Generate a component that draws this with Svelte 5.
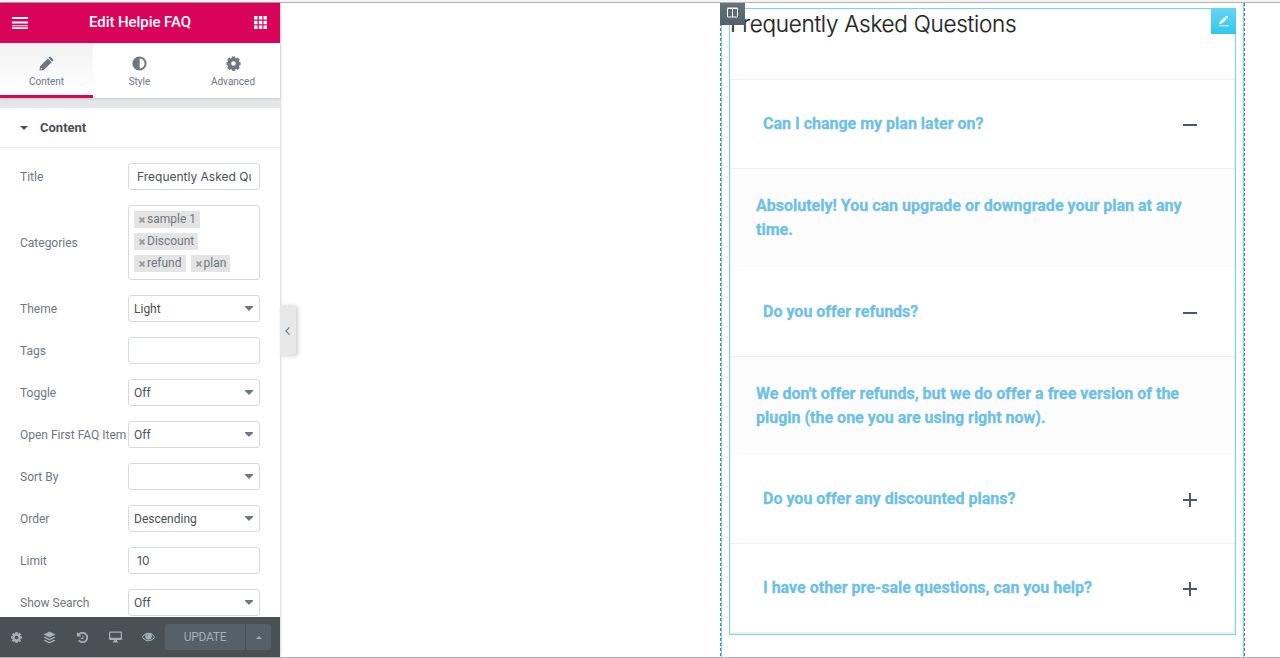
<script>
  const tabs = [
    { id: 'content', label: 'Content' },
    { id: 'style', label: 'Style' },
    { id: 'advanced', label: 'Advanced' }
  ];
  let active = $state('content');

  const controls = [
    { label: 'Title', type: 'text', value: 'Frequently Asked Questions' },
    { label: 'Categories', type: 'tags', value: ['sample 1', 'Discount', 'refund', 'plan'] },
    { label: 'Theme', type: 'select', value: 'Light' },
    { label: 'Tags', type: 'text', value: '' },
    { label: 'Toggle', type: 'select', value: 'Off' },
    { label: 'Open First FAQ Item', type: 'select', value: 'Off' },
    { label: 'Sort By', type: 'select', value: '' },
    { label: 'Order', type: 'select', value: 'Descending' },
    { label: 'Limit', type: 'text', value: '10' },
    { label: 'Show Search', type: 'select', value: 'Off' }
  ];

  let faqs = $state([
    { q: 'Can I change my plan later on?', a: 'Absolutely! You can upgrade or downgrade your plan at any time.', open: true },
    { q: 'Do you offer refunds?', a: "We don't offer refunds, but we do offer a free version of the plugin (the one you are using right now).", open: true },
    { q: 'Do you offer any discounted plans?', a: '', open: false },
    { q: 'I have other pre-sale questions, can you help?', a: '', open: false }
  ]);

  const cog = 'M1152 896q0-106-75-181t-181-75-181 75-75 181 75 181 181 75 181-75 75-181zm512-109v222q0 12-8 23t-20 13l-185 28q-19 54-39 91 35 50 107 138 10 12 10 25t-9 23q-27 37-99 108t-94 71q-12 0-26-9l-138-108q-44 23-91 38-16 136-29 186-7 28-36 28h-222q-14 0-24.5-8.5t-11.500-21.500l-28-184q-49-16-90-37l-141 107q-10 9-25 9-14 0-25-11-126-114-165-168-7-10-7-23 0-12 8-23 15-21 51-66.500t54-70.500q-27-50-41-99l-183-27q-13-2-21-12.500t-8-23.500v-222q0-12 8-23t19-13l186-28q14-46 39-92-40-57-107-138-10-12-10-24 0-10 9-23 26-36 98.500-107.500t94.500-71.500q13 0 26 10l138 107q44-23 91-38 16-136 29-186 7-28 36-28h222q14 0 24.500 8.500t11.500 21.500l28 184q49 16 90 37l142-107q9-9 24-9 13 0 25 10 129 119 165 170 7 8 7 22 0 12-8 23-15 21-51 66.500t-54 70.500q26 50 41 98l183 28q13 2 21 12.500t8 23.500z';
  const history = 'M1664 896q0 156-61 298t-164 245-245 164-298 61q-172 0-327-72.500t-264-204.500q-7-10-6.500-22.500t8.500-20.500l137-138q10-9 25-9 16 2 23 12 73 95 179 147t225 52q104 0 198.500-40.500t163.500-109.500 109.500-163.500 40.500-198.500-40.500-198.500-109.500-163.500-163.500-109.500-198.500-40.500q-98 0-188 35.500t-160 101.500l137 138q31 30 14 69-17 40-59 40h-448q-26 0-45-19t-19-45v-448q0-42 40-59 39-17 69 14l130 129q107-101 244.500-156.500t284.500-55.500q156 0 298 61t245 164 164 245 61 298zm-640-288v448q0 14-9 23t-23 9h-320q-14 0-23-9t-9-23v-64q0-14 9-23t23-9h224v-352q0-14 9-23t23-9h64q14 0 23 9t9 23z';
</script>

<div class="app">
  <aside class="panel">
    <header class="bar">
      <svg width="16" height="12" viewBox="0 0 16 12" fill="#fff"><path d="M0 0h16v2H0zM0 4.500h16v2H0zM0 10.200h16V12H0z" /><path d="M0 8h16v1.300H0z" opacity=".75" /></svg>
      <h1>Edit Helpie FAQ</h1>
      <svg class="grid" width="13" height="13" viewBox="0 0 13 13" fill="#fff"><path d="M0 0h3.500v3.500H0zM4.800 0h3.500v3.500H4.800zM9.500 0H13v3.500H9.500zM0 4.800h3.500v3.500H0zM4.800 4.800h3.500v3.500H4.800zM9.500 4.800H13v3.500H9.500zM0 9.500h3.500V13H0zM4.800 9.500h3.500V13H4.800zM9.500 9.500H13V13H9.500z" /></svg>
    </header>

    <nav class="tabs">
      {#each tabs as tab}
        <button class="tab" class:active={active === tab.id} onclick={() => (active = tab.id)}>
          {#if tab.id === 'content'}
            <svg width="17" height="17" viewBox="0 0 17 17"><path fill-rule="evenodd" d="M2 11.200L9.800 3.400l3.900 3.900-7.800 7.800L1.500 15.500zM2.900 12.800l-.2 1.600 1.500-.3z" /><path d="M10.400 2.800l.9-.9q.7-.6 1.400 0l2.400 2.400q.7.700 0 1.400l-.9.900z" /></svg>
          {:else if tab.id === 'style'}
            <svg width="17" height="17" viewBox="0 0 17 17"><circle cx="8.500" cy="8.500" r="6.100" fill="none" stroke="#6d7882" stroke-width="2" /><path d="M8.700 2.500H8.500a6 6 0 0 0 0 12h.2z" /></svg>
          {:else}
            <svg width="17" height="17" viewBox="0 0 17 17"><path fill-rule="evenodd" d="M6.900 1.500h3.200l.4 1.800.7.300 1.600-1 2 2-1 1.600.3.700 1.500.4v2.900l-1.500.4-.3.800 1 1.500-2.100 2.100-1.500-1-.8.300-.3 1.500H6.900l-.3-1.500-.8-.3-1.500 1-2.100-2.100 1-1.500-.3-.8-1.400-.4V7.300l1.400-.4.300-.7-1-1.600 2-2 1.600 1 .8-.3zM8.500 6.200a2.300 2.300 0 1 0 0 4.600 2.300 2.300 0 0 0 0-4.600z" /></svg>
          {/if}
          <span>{tab.label}</span>
        </button>
      {/each}
    </nav>

    <div class="section">
      <svg width="8" height="4" viewBox="0 0 8 4" fill="#495157"><path d="M0 0h8L4 4z" /></svg>
      <h2>Content</h2>
    </div>

    <div class="controls">
      {#each controls as c}
        <div class="row">
          <span class="label">{c.label}</span>
          {#if c.type === 'tags'}
            <div class="field taglist">
              {#each c.value as tag}
                <span class="tag">
                  <svg width="6" height="6" viewBox="0 0 6 6"><path d="M.5.500l5 5M5.500.500l-5 5" stroke="#999" stroke-width="1.900" /></svg>{tag}
                </span>
              {/each}
            </div>
          {:else if c.type === 'select'}
            <div class="field select">
              <span>{c.value}</span>
              <svg width="8" height="5" viewBox="0 0 8 5" fill="#6d7882"><path d="M0 0h8v1L4 5 0 1z" /></svg>
            </div>
          {:else}
            <div class="field text"><span>{c.value}</span></div>
          {/if}
        </div>
      {/each}
    </div>

    <footer>
      <div class="tool"><svg width="13" height="13" viewBox="0 0 1792 1792"><path d={cog} /></svg></div>
      <div class="tool"><svg width="13" height="13" viewBox="0 0 13 13"><path d="M6.500.5l6 3-6 3-6-3zM2 5.700l4.500 2.200L11 5.700l1.500.8-6 3-6-3zM2 8.700l4.500 2.200L11 8.700l1.500.8-6 3-6-3z" /></svg></div>
      <div class="tool"><svg width="13" height="13" viewBox="0 0 1792 1792"><path d={history} /></svg></div>
      <div class="tool"><svg width="13" height="12" viewBox="0 0 13 12"><path fill-rule="evenodd" d="M1 .5h11a1 1 0 0 1 1 1v6.500a1 1 0 0 1-1 1H8v1l1.200.8v.7H3.800v-.7L5 10V9H1a1 1 0 0 1-1-1V1.500a1 1 0 0 1 1-1zM1.200 1.700v5.100h10.600V1.700z" /></svg></div>
      <div class="tool"><svg width="13" height="10" viewBox="0 0 13 10"><path fill-rule="evenodd" d="M6.500.8C9.300.8 11.800 2.500 13 5c-1.200 2.500-3.700 4.200-6.500 4.200S1.200 7.500 0 5C1.200 2.500 3.700.8 6.500.8zM3.500 2.600A6 6 0 0 0 1 5c1.100 1.900 3.200 3.200 5.500 3.200S10.900 6.900 12 5a6 6 0 0 0-2.500-2.400 3.400 3.400 0 1 1-6 0z" /><circle cx="6.500" cy="4.500" r="2.700" /><path d="M4.900 4.400a1.600 1.600 0 0 1 1.600-1.600" stroke="#495157" stroke-width=".7" fill="none" /></svg></div>
      <div class="update">
        <button class="save">UPDATE</button>
        <button class="more" aria-label="Save options"><svg width="6" height="3" viewBox="0 0 6 3"><path d="M3 0l3 3H0z" /></svg></button>
      </div>
    </footer>

    <div class="collapse"><svg width="5" height="8" viewBox="0 0 5 8"><path d="M4.500.4L.8 4l3.700 3.600" fill="none" stroke="#6d7882" stroke-width="1.200" /></svg></div>
  </aside>

  <main>
    <div class="column">
      <div class="colhandle"><svg width="11" height="11" viewBox="0 0 11 11"><path d="M.5 1.500h10v8.500H.5zM.5 1h10M5.500 1v9" fill="none" stroke="#fff" /></svg></div>
      <section class="widget">
        <div class="edit"><svg width="12" height="12" viewBox="0 0 12 12" fill="#fff"><path d="M1.300 9.200l.5-2.500 4.700-4.500 2 2-4.700 4.500zM7.100 1.700l.9-.8q.6-.5 1.200 0l.8.800q.5.600 0 1.200l-.9.800z" /><path d="M1 10.300h10v1H1z" opacity=".8" /></svg></div>
        <h3>Frequently Asked Questions</h3>
        <div class="accordion">
          {#each faqs as f}
            <button class="question" class:open={f.open} onclick={() => (f.open = !f.open)}>
              <span>{f.q}</span>
              <i class="sign"></i>
            </button>
            {#if f.open}<p class="answer">{f.a}</p>{/if}
          {/each}
        </div>
      </section>
    </div>
  </main>
</div>

<style>
  :global(body) { margin: 0; background: #fff; }
  .app { box-sizing: border-box; width: 1280px; height: 658px; display: flex; border-top: 2px solid #f3f3f3; border-bottom: 1px solid #b2b2b2; font-family: Roboto, sans-serif; overflow: hidden; background: linear-gradient(#b2b2b2 1px, #fff 1px); padding-top: 1px; }
  .app * { box-sizing: border-box; }
  button { border: 0; padding: 0; margin: 0; background: none; font-family: inherit; }
  svg { display: block; flex: none; }
  .panel { position: relative; z-index: 2; width: 280px; height: 654px; flex: none; display: flex; flex-direction: column; background: #fff; box-shadow: 0 0 3px rgba(0, 0, 0, .3); }
  .bar { height: 40px; flex: none; display: flex; align-items: center; justify-content: space-between; padding: 0 13px 0 12px; background: #d9045a; }
  .grid { margin-bottom: 2px; }
  h1 { margin: 0; font-size: 15px; line-height: 20px; font-weight: 500; letter-spacing: -.08px; color: #fff; padding: 0 2px 2px 0; }
  .tabs { height: 55px; flex: none; display: grid; grid-template-columns: 93px 93px 94px; box-shadow: 0 1px 2px rgba(0, 0, 0, .12); z-index: 1; background: #fff; }
  .tab { display: flex; flex-direction: column; align-items: center; padding-top: 12px; gap: 4px; border-bottom: 3px solid transparent; fill: #6d7882; color: #6d7882; font-size: 10px; line-height: 12px; }
  .tab.active { background: linear-gradient(#f2f2f2, #fff); border-bottom-color: #d9045a; }
  .section { height: 50px; flex: none; display: flex; align-items: center; gap: 12px; padding-left: 20px; border-top: 10px solid #e3e7ea; border-bottom: 1px solid #e3e6e9; }
  h2 { margin: 0; font-size: 13px; line-height: 20px; font-weight: 700; color: #495157; }
  .controls { flex: 1; min-height: 0; overflow: hidden; padding: 15px 20px 0; display: flex; flex-direction: column; gap: 15px; }
  .row { flex: none; display: flex; align-items: center; justify-content: space-between; }
  .label { width: 108px; white-space: nowrap; font-size: 12px; line-height: 20px; color: #6d7882; }
  .field { width: 132px; height: 27px; border: 1px solid #d5dadf; border-radius: 3px; color: #495157; font-size: 12px; }
  .select { display: flex; align-items: center; justify-content: space-between; padding: 0 6px 0 5px; }
  .text { display: flex; align-items: center; padding: 0 8px; font-family: Inter, sans-serif; }
  .text span { overflow: hidden; white-space: nowrap; }
  .taglist { height: 75px; display: flex; flex-wrap: wrap; align-content: flex-start; gap: 5px; padding: 5px; }
  .tag { height: 17px; display: flex; align-items: center; gap: 2px; padding: 0 4px 0 5px; background: #e4e4e4; color: #6d7882; line-height: 17px; }
  footer { height: 40px; flex: none; display: flex; align-items: center; background: #495157; fill: #a4afb7; }
  .tool { width: 33px; display: flex; justify-content: center; }
  .update { display: flex; width: 106px; height: 26px; gap: 1px; }
  .update button { background: #556068; color: #a4afb7; font-size: 12px; letter-spacing: -.3px; }
  .save { width: 80px; border-radius: 3px 0 0 3px; }
  .more { width: 25px; display: flex; align-items: center; justify-content: center; border-radius: 0 3px 3px 0; }
  .collapse { position: absolute; left: 280px; top: 302px; width: 16px; height: 50px; padding: 2px 2px 0 0; display: flex; align-items: center; justify-content: center; background: #e6e9ec; border-radius: 0 3px 3px 0; box-shadow: 2px 1px 4px rgba(0, 0, 0, .2); }
  main { flex: 1; padding-left: 440px; }
  .column { position: relative; width: 525px; height: 654px; padding: 5px 9px 0; background:
    repeating-linear-gradient(#6d7882 0 3px, transparent 3px 5px) 0 0 / 1px 100% no-repeat,
    repeating-linear-gradient(#6d7882 0 3px, transparent 3px 5px) 100% 0 / 1px 100% no-repeat,
    linear-gradient(#71d7f7, #71d7f7) 1px 0 / 1px 100% no-repeat,
    linear-gradient(#71d7f7, #71d7f7) 523px 0 / 1px 100% no-repeat; }
  .colhandle { position: absolute; z-index: 1; left: 0; top: 0; width: 25px; height: 22px; padding: 4px 0 0 7px; background: linear-gradient(#64717b, #55616a); }
  .widget { position: relative; width: 507px; height: 627px; border: 1px solid #71d7f7; }
  .edit { position: absolute; right: -1px; top: -1px; width: 25px; height: 26px; display: flex; align-items: center; justify-content: center; background: linear-gradient(#66d5f3, #30c8ef); }
  h3 { margin: 0; height: 70px; padding: 1px 0 0; font: 300 22.500px/28px Inter, sans-serif; letter-spacing: -.27px; color: #222; -webkit-text-stroke: .2px #222; white-space: nowrap; }
  .accordion { width: 505px; border: 1px solid #efefef; border-bottom-width: 2px; border-top: 0; }
  .question { width: 100%; height: 89px; display: flex; align-items: center; justify-content: space-between; padding: 0 37px 1px 32px; border-top: 1px solid #efefef; text-align: left; font-size: 16px; font-weight: 700; line-height: 24px; color: #6ec1e4; }
  .question, .answer { -webkit-text-stroke: .3px #6ec1e4; }
  .answer + .question { height: 88px; border-top: 0; padding-top: 0; padding-bottom: 0; }
  .answer + .question.open { height: 89px; padding-top: 1px; }
  .answer { margin: 0; height: 99px; padding: 25px 26px 0 25px; border-top: 1px solid #efefef; background: #fcfcfc; font-size: 16px; font-weight: 700; line-height: 24px; color: #6ec1e4; }
  .sign { width: 14px; height: 14px; margin-top: 3px; background: linear-gradient(#475a6b, #475a6b) 0 6px / 14px 2px no-repeat, linear-gradient(#475a6b, #475a6b) 6px 0 / 2px 14px no-repeat; }
  .answer + .question .sign { margin-top: 2px; }
  .answer + .question.open .sign { margin-top: 1px; }
  .open .sign { background: linear-gradient(#475a6b, #475a6b) 0 6px / 14px 2px no-repeat; }
</style>
